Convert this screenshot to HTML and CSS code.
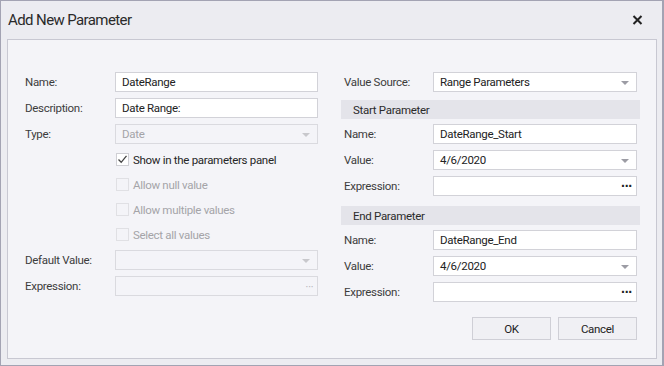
FILE: index.html
```html
<!DOCTYPE html>
<html>
<head>
<meta charset="UTF-8">
<title>Add New Parameter</title>
<link rel="stylesheet" href="styles.css">
</head>
<body>
<div class="window">
	<div class="titlebar">
		<span class="title">Add New Parameter</span>
		<svg class="close" width="11" height="10" viewBox="0 0 11 10"><path d="M1.5 1 L9.5 9 M9.5 1 L1.5 9" stroke="#222" stroke-width="2"/></svg>
	</div>
	<div class="panel">
		<div class="columns">
			<!-- left side -->
			<div class="col left">
				<div class="row"><label>Name:</label><div class="edit">DateRange</div></div>
				<div class="row"><label>Description:</label><div class="edit">Date Range:</div></div>
				<div class="row"><label>Type:</label><div class="edit off combo">Date<i class="arrow"></i></div></div>
				<div class="row check"><label></label><div class="cb"><span class="box"><svg width="11" height="11" viewBox="0 0 11 11"><path d="M1.5 5.5 L4.2 8.3 L9.5 1.8" fill="none" stroke="#444" stroke-width="1.3"/></svg></span>Show in the parameters panel</div></div>
				<div class="row check"><label></label><div class="cb off"><span class="box"></span>Allow null value</div></div>
				<div class="row check"><label></label><div class="cb off"><span class="box"></span>Allow multiple values</div></div>
				<div class="row check"><label></label><div class="cb off"><span class="box"></span>Select all values</div></div>
				<div class="row"><label>Default Value:</label><div class="edit off combo"><i class="arrow"></i></div></div>
				<div class="row"><label>Expression:</label><div class="edit off combo"><b class="dots">···</b></div></div>
			</div>
			<!-- right side -->
			<div class="col right">
				<div class="row"><label>Value Source:</label><div class="edit combo">Range Parameters<i class="arrow"></i></div></div>
				<div class="group">Start Parameter</div>
				<div class="row"><label>Name:</label><div class="edit">DateRange_Start</div></div>
				<div class="row"><label>Value:</label><div class="edit combo">4/6/2020<i class="arrow"></i></div></div>
				<div class="row"><label>Expression:</label><div class="edit combo"><b class="dots">···</b></div></div>
				<div class="group second">End Parameter</div>
				<div class="row"><label>Name:</label><div class="edit">DateRange_End</div></div>
				<div class="row"><label>Value:</label><div class="edit combo">4/6/2020<i class="arrow"></i></div></div>
				<div class="row"><label>Expression:</label><div class="edit combo"><b class="dots">···</b></div></div>
				<div class="buttons">
					<button class="btn">OK</button>
					<button class="btn">Cancel</button>
				</div>
			</div>
		</div>
	</div>
</div>
</body>
</html>
```

FILE: styles.css
```css
*{
	margin:0;
	padding:0;
	box-sizing:border-box;
}
body{
	background:#fff;
	font-family:Roboto, "Liberation Sans", Arial, sans-serif;
	font-size:11.5px;
	letter-spacing:-0.3px;
	color:#2b2b2b;
}
/* outer frame */
.window{
	width:664px;
	height:366px;
	border:1px solid #a3a3b3;
	border-right-width:2px;
	background:#ececf1;
	display:flex;
	flex-direction:column;
}
.titlebar{
	height:38px;
	display:flex;
	align-items:center;
	justify-content:space-between;
	padding:0 19px 0 7px;
}
.title{
	font-size:15px;
	letter-spacing:-0.6px;
	color:#2a2a2a;
	margin-top:-1px;
}
.panel{
	margin:0 5px 0 6px;
	height:320px;
	border:1px solid #c8c8d2;
	background:#f4f4f8;
	padding:32px 0 0 17px;
}
.columns{
	display:flex;
	gap:23px;
}
.col{
	display:flex;
	flex-direction:column;
	gap:6px;
}
.col.left{
	width:293px;
}
.col.right{
	width:299px;
}
.row{
	display:flex;
	align-items:center;
	height:20px;
}
.row.check{
	height:19px;
}
.left label{
	width:90px;
}
.right .row{
	padding:0 3px;
}
.right label{
	width:89px;
}
label{
	flex:none;
	color:#3c3c3c;
}
.edit{
	flex:1;
	height:20px;
	border:1px solid #d2d2d8;
	background:#fff;
	padding:0 0 0 6px;
	display:flex;
	align-items:center;
	position:relative;
	color:#222;
}
.edit.off{
	background:#f4f4f8;
	border-color:#dadadf;
	color:#a4a4a8;
}
/* dropdown arrow */
.arrow{
	position:absolute;
	right:7px;
	top:8px;
	width:0;
	height:0;
	border-left:4px solid transparent;
	border-right:4px solid transparent;
	border-top:4px solid #9c9ca4;
}
.edit.off .arrow{
	border-top-color:#c8c8cc;
}
.dots{
	position:absolute;
	right:4px;
	top:1px;
	font-family:"Liberation Sans", Arial, sans-serif;
	font-size:14px;
	letter-spacing:-1px;
	color:#222;
	line-height:16px;
}
.edit.off .dots{
	color:#b8b8bc;
	font-weight:normal;
	font-size:11px;
}
/* checkboxes */
.cb{
	display:flex;
	align-items:center;
	margin-left:1px;
	color:#262626;
}
.cb.off{
	color:#a4a4a8;
}
.box{
	width:13px;
	height:13px;
	border:1px solid #cfcfd4;
	background:#fff;
	margin-right:4px;
	display:flex;
	align-items:center;
	justify-content:center;
}
.cb.off .box{
	background:#f4f4f8;
	border-color:#e0e0e4;
}
/* group headers */
.group{
	height:19px;
	background:#e4e4ea;
	padding-left:12px;
	display:flex;
	align-items:center;
	margin-top:2px;
	margin-bottom:-1px;
	color:#2b2b2b;
}
.group.second{
	margin-top:4px;
}
.buttons{
	display:flex;
	justify-content:flex-end;
	gap:7px;
	padding-right:3px;
	margin-top:9px;
}
.btn{
	width:79px;
	height:23px;
	border:1px solid #cfcfd6;
	background:#f0f0f4;
	font-family:inherit;
	font-size:11.5px;
	letter-spacing:-0.3px;
	color:#222;
}
```
